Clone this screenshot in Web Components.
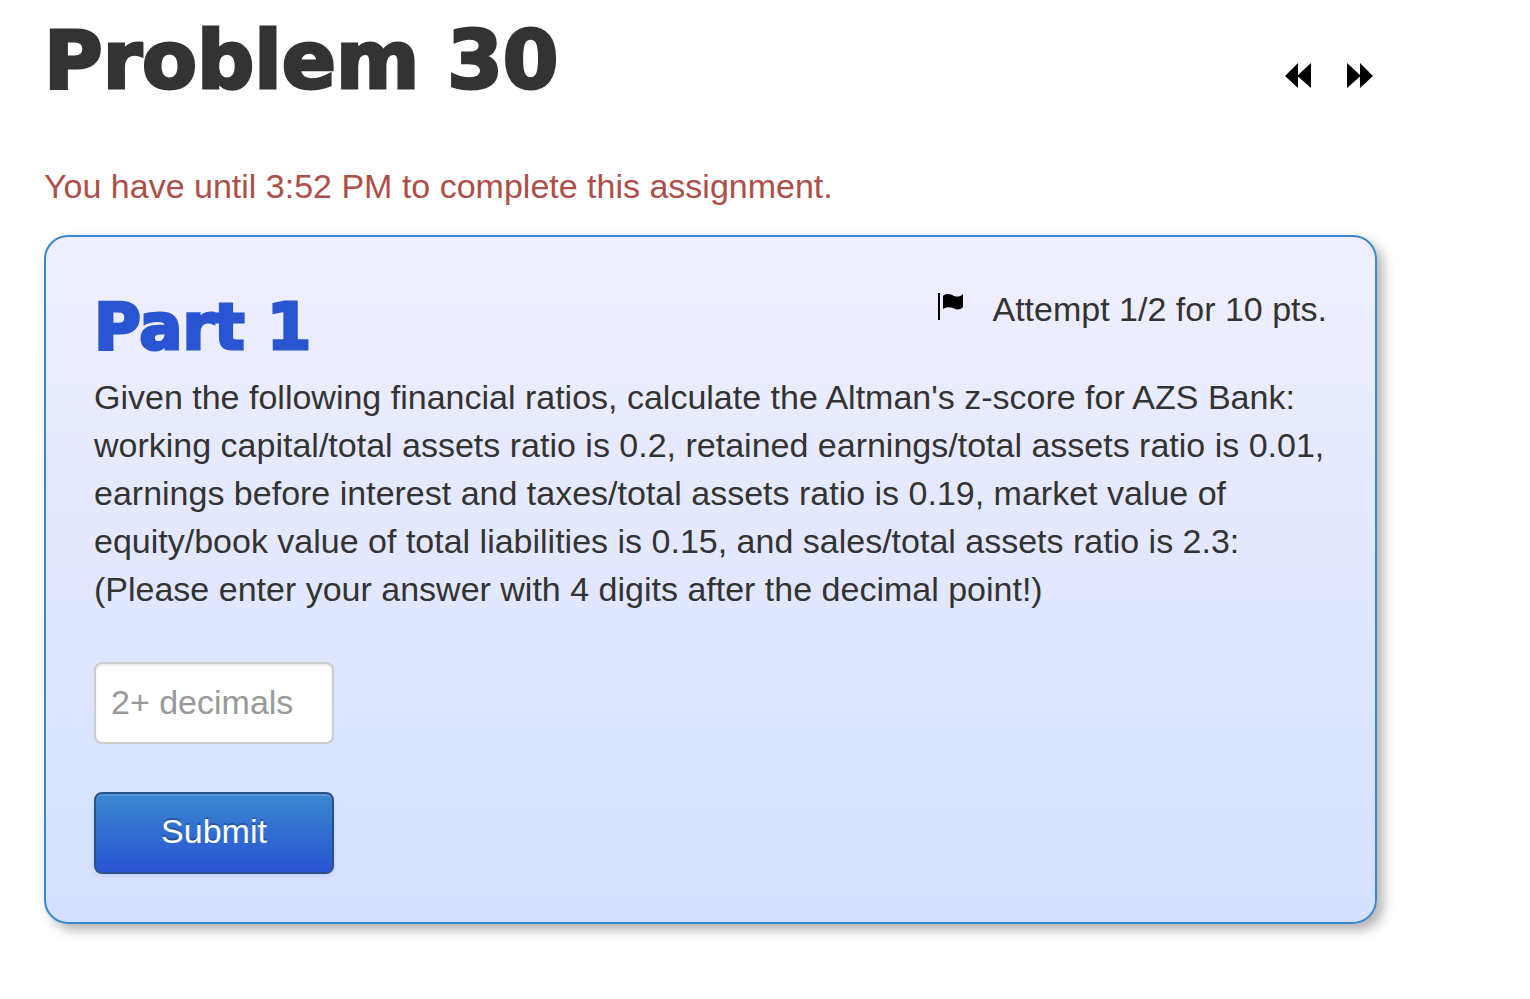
<!DOCTYPE html>
<html lang="en">
<head>
<meta charset="utf-8">
<title>Problem 30</title>
<style>
body { margin: 0; background: #fff; color: #333; font: 34px/48px "Liberation Sans", Arial, sans-serif; }
</style>
</head>
<body>
<problem-page>
  <problem-header slot="header">Problem 30</problem-header>
  <time-notice slot="notice">You have until 3:52 PM to complete this assignment.</time-notice>
  <problem-part>
    <span slot="title">Part 1</span>
    <span slot="attempt">Attempt 1/2 for 10 pts.</span>
    Given the following financial ratios, calculate the Altman's z-score for AZS Bank: working capital/total assets ratio is 0.2, retained earnings/total assets ratio is 0.01, earnings before interest and taxes/total assets ratio is 0.19, market value of equity/book value of total liabilities is 0.15, and sales/total assets ratio is 2.3:<br>(Please enter your answer with 4 digits after the decimal point!)
    <answer-form slot="answer"></answer-form>
  </problem-part>
</problem-page>
<script>
function define(name, html) {
  customElements.define(name, class extends HTMLElement {
    constructor() {
      super();
      this.attachShadow({ mode: "open" }).innerHTML = html;
    }
  });
}

define("problem-page", `
<style>
:host { display: block; padding: 11px 10% 48px 44px; }
main { display: flex; flex-direction: column; }
</style>
<main><slot name="header"></slot><slot name="notice"></slot><slot></slot></main>`);

define("problem-header", `
<style>
:host { display: flex; justify-content: space-between; align-items: center; margin-bottom: 51px; }
h1 { margin: 0; font: 900 80px/100px "Arial Black", "DejaVu Sans", sans-serif; -webkit-text-stroke: 3px currentColor; }
nav { display: flex; gap: 36px; padding: 30px 4px 0 0; }
a { display: block; width: 26px; height: 26px; color: #000; }
svg { display: block; width: 26px; height: 26px; }
</style>
<h1><slot></slot></h1>
<nav>
  <a href="#previous" aria-label="Previous problem"><svg viewBox="0 0 26 26" fill="currentColor"><path d="M0 13 13 0V12L26 0V25L13 13.500V25Z"/></svg></a>
  <a href="#next" aria-label="Next problem"><svg viewBox="0 0 26 26" fill="currentColor"><path d="M26 13 13 0V12L0 0V25L13 13.500V25Z"/></svg></a>
</nav>`);

define("time-notice", `
<style>
:host { display: block; margin-bottom: 25px; color: #ad4f49; }
p { margin: 0; }
</style>
<p><slot></slot></p>`);

define("problem-part", `
<style>
:host { display: block; }
section { padding: 48px; border: 2px solid #3a87d0; border-radius: 24px; background: linear-gradient(#f0efff, #d3e0ff); box-shadow: 6px 6px 12px rgba(0, 0, 0, .3); }
header { display: flex; justify-content: space-between; align-items: flex-start; margin-bottom: 4px; }
h2 { margin: 0; color: #2954d2; font: 900 64px/84px "Arial Black", "DejaVu Sans", sans-serif; -webkit-text-stroke: 3px currentColor; }
.attempt { display: flex; gap: 26px; }
svg { display: block; width: 28px; height: 28px; margin-top: 8px; }
p { margin: 0 0 49px; }
</style>
<section>
  <header>
    <h2><slot name="title"></slot></h2>
    <div class="attempt">
      <svg viewBox="0 0 28 28" aria-hidden="true"><path d="M0 0H2V27H0Z"/><path d="M5 3C8 0 13 1 16 3C19 4 22 4 25 1V14C22 17 19 17 16 15.500C12 13.500 8 14 5 16Z"/></svg>
      <slot name="attempt"></slot>
    </div>
  </header>
  <p><slot></slot></p>
  <slot name="answer"></slot>
</section>`);

define("answer-form", `
<style>
:host { display: block; }
form { display: flex; flex-direction: column; align-items: flex-start; gap: 48px; }
input, button { box-sizing: border-box; width: 240px; height: 82px; margin: 0; border-radius: 8px; font: inherit; }
input { padding: 0 15px 2px; border: 2px solid #ccc; background: #fff; color: #555; box-shadow: inset 0 2px 2px rgba(0, 0, 0, .075); }
input::placeholder { color: #999; opacity: 1; }
button { padding: 0 24px 4px; border: 2px solid #2c5189; background: linear-gradient(#3a87d0, #2954d2); color: #fff; text-shadow: 0 -2px 0 rgba(0, 0, 0, .25); box-shadow: inset 0 2px 0 rgba(255, 255, 255, .15), 0 2px 4px rgba(0, 0, 0, .08); }
</style>
<form onsubmit="return false">
  <input type="text" placeholder="2+ decimals" aria-label="Answer">
  <button type="submit">Submit</button>
</form>`);
</script>
</body>
</html>
